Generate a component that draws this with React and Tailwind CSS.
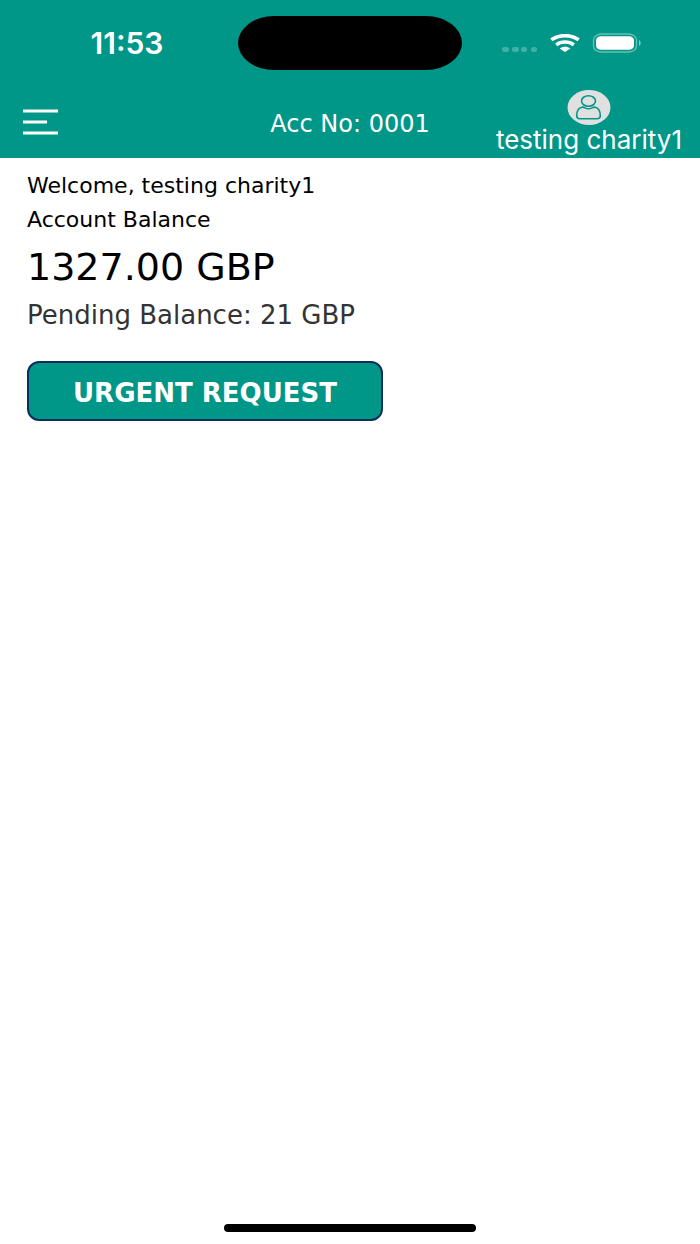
const StatusBar = () => (
  <div className="grid grid-cols-[1fr_32%_1fr] items-center pt-4 font-['Inter','Liberation_Sans',sans-serif]">
    <span className="pl-4 text-center text-[30px] leading-8 font-semibold">11:53</span>
    <div className="h-[54px] rounded-[36px/27px] bg-black" />
    <div className="flex items-center pl-10">
      <svg viewBox="0 0 36 6" className="mt-3 h-[6px] w-[36px] shrink-0" fill="#fff" opacity="0.25" aria-hidden="true">
        <rect x="0" y="1" width="7" height="5" rx="2" />
        <rect x="10" y="1" width="7" height="5" rx="2" />
        <rect x="19" y="1" width="6" height="5" rx="2" />
        <rect x="29" y="1" width="6" height="5" rx="2" />
      </svg>
      <svg viewBox="0 0 30 18" className="ml-3 h-[18px] w-[30px] shrink-0" fill="none" stroke="#fff" strokeWidth="3.6" aria-hidden="true">
        <path d="M1.3 5.8C9 .2 21 .2 28.7 5.8" />
        <path d="M6.2 10.8C11 7 19 7 23.8 10.8" />
        <path d="M9.600 14.600C12.8 12.2 17.2 12.2 20.400 14.600L15 18Z" fill="#fff" stroke="none" />
      </svg>
      <svg viewBox="0 0 50 20" className="ml-3 h-[20px] w-[50px] shrink-0" aria-hidden="true">
        <rect x="1.5" y="1" width="43" height="18" rx="8" ry="6" fill="none" stroke="#fff" strokeOpacity="0.4" strokeWidth="1.4" />
        <rect x="4" y="3.3" width="38" height="13.4" rx="5" ry="4" fill="#fff" />
        <path d="M47 7C49.2 8 49.2 12 47 13Z" fill="#fff" fillOpacity="0.5" />
      </svg>
    </div>
  </div>
);

const Header = () => (
  <div className="grid grid-cols-[1fr_auto_1fr] items-center pt-5 pb-1">
    <button type="button" aria-label="Open menu" className="ml-[22px] justify-self-start">
      <svg viewBox="0 0 36 28" className="h-[28px] w-[36px]" fill="none" stroke="#fff" strokeWidth="3" aria-hidden="true">
        <path d="M1 3h35M1 14h24M1 25h35" />
      </svg>
    </button>
    <p className="pt-1 text-[24px] leading-7">Acc No: 0001</p>
    <a
      href="#profile"
      className="mr-[18px] flex flex-col items-center justify-self-end font-['Inter','Liberation_Sans',sans-serif]"
    >
      <svg viewBox="0 0 44 36" className="h-[36px] w-[44px]" fill="none" stroke="#009688" strokeWidth="1.6" aria-hidden="true">
        <ellipse cx="22" cy="17.5" rx="21.5" ry="17.5" fill="#e0e0e0" stroke="none" />
        <ellipse cx="21.5" cy="11" rx="7" ry="5.3" />
        <path d="M15 17.2C17.3 16.8 18.5 18.8 21.5 18.8S25.7 16.8 28 17.2C32 18 33.3 22.5 33.3 25.8C33.3 28 32.2 28.8 30 28.8H13C10.8 28.8 9.7 28 9.7 25.8C9.7 22.5 11 18 15 17.2Z" />
      </svg>
      <span className="text-[26px] leading-7">testing charity1</span>
    </a>
  </div>
);

export default function App() {
  return (
    <div className="flex min-h-screen flex-col bg-white font-['DejaVu_Sans','Liberation_Sans',sans-serif] text-black">
      <header className="bg-[#009688] text-white">
        <StatusBar />
        <Header />
      </header>

      <main className="flex flex-1 flex-col items-start px-[27px] pt-[11px]">
        <p className="text-[22px] leading-[34px]">Welcome, testing charity1</p>
        <p className="text-[22px] leading-[34px]">Account Balance</p>
        <h1 className="mt-[6px] text-[38px] leading-12">1327.00 GBP</h1>
        <p className="mt-2 text-[26px] leading-8 text-[#333]">Pending Balance: 21 GBP</p>
        <button
          type="button"
          className="mt-[30px] rounded-xl border-2 border-[#0a2f5c] bg-[#009688] px-11 pt-[14px] pb-[10px] text-[26px] leading-8 font-bold text-white"
        >
          URGENT REQUEST
        </button>
      </main>

      <footer className="flex justify-center pb-3">
        <div className="h-2 w-[36%] rounded-full bg-black" />
      </footer>
    </div>
  );
}
